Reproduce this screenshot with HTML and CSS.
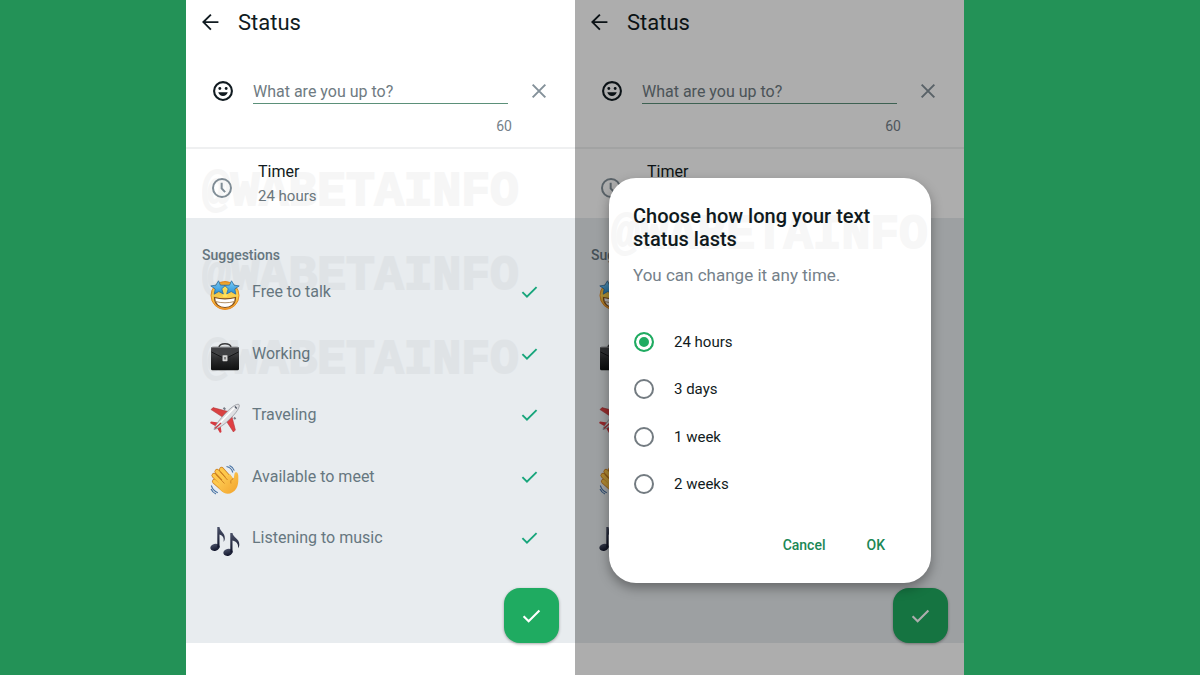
FILE: index.html
```html
<!DOCTYPE html>
<html lang="en">
<head>
    <meta charset="UTF-8">
    <meta name="viewport" content="width=device-width, initial-scale=1.0">
    <title>Status</title>
    <link rel="stylesheet" href="styles.css">
</head>
<body>
    <!-- Shared icons -->
    <svg class="sprite" aria-hidden="true">
        <defs>
            <linearGradient id="gold" x1="0" y1="0" x2="0" y2="1">
                <stop offset="0" stop-color="#f5a32a"/>
                <stop offset=".5" stop-color="#fbd34e"/>
                <stop offset="1" stop-color="#f3972a"/>
            </linearGradient>
            <linearGradient id="star" x1="0" y1="0" x2="0" y2="1">
                <stop offset="0" stop-color="#7fd0fb"/>
                <stop offset="1" stop-color="#258fd6"/>
            </linearGradient>
            <linearGradient id="leather" x1="0" y1="0" x2="0" y2="1">
                <stop offset="0" stop-color="#5a5b5e"/>
                <stop offset=".5" stop-color="#2c2d2f"/>
                <stop offset="1" stop-color="#0f1011"/>
            </linearGradient>
            <linearGradient id="skin" x1="0" y1="0" x2="1" y2="1">
                <stop offset="0" stop-color="#ffd35a"/>
                <stop offset="1" stop-color="#f2a22c"/>
            </linearGradient>
            <linearGradient id="note" x1="0" y1="0" x2="0" y2="1">
                <stop offset="0" stop-color="#4a5168"/>
                <stop offset="1" stop-color="#11152b"/>
            </linearGradient>
        </defs>
        <symbol id="back" viewBox="0 0 24 24">
            <path d="M22 11.500H3.500M12.500 2L3 11.500l9.500 9.500" fill="none" stroke="currentColor" stroke-width="2.400"/>
        </symbol>
        <symbol id="smile" viewBox="0 0 24 24">
            <circle cx="12" cy="12" r="10.700" fill="none" stroke="currentColor" stroke-width="2.500"/>
            <circle cx="8.200" cy="9" r="1.700" fill="currentColor"/>
            <circle cx="15.800" cy="9" r="1.700" fill="currentColor"/>
            <path d="M6.300 13.500h11.400c-.8 2.900-3 4.600-5.700 4.600s-4.900-1.700-5.700-4.600z" fill="currentColor"/>
        </symbol>
        <symbol id="close" viewBox="0 0 24 24">
            <path d="M2.500 2.500l19 19M21.500 2.500l-19 19" fill="none" stroke="currentColor" stroke-width="3"/>
        </symbol>
        <symbol id="clock" viewBox="0 0 24 24">
            <circle cx="12" cy="12" r="10.800" fill="none" stroke="currentColor" stroke-width="2.400"/>
            <path d="M11.600 5.800v6.600l4.200 4.600" fill="none" stroke="currentColor" stroke-width="2.400"/>
        </symbol>
        <symbol id="check" viewBox="0 0 18 14">
            <path d="M1.500 7.200l4.800 4.800L16.500 1.800" fill="none" stroke="currentColor" stroke-width="2"/>
        </symbol>
        <symbol id="starstruck" viewBox="0 0 30 30">
            <circle cx="15" cy="15.500" r="14" fill="url(#gold)" stroke="#e88d23"/>
            <path d="M12 8l3-2 3 2-1 9h-4z" fill="#ffe15a"/>
            <path d="M4.500 17.500c6.500 1.800 14.500 1.800 21 0 0 6.200-4.500 10-10.500 10s-10.500-3.800-10.500-10z" fill="#fff" stroke="#80501d" stroke-width="1.200"/>
            <path d="M5.500 21.500c6 1.700 13 1.700 19 0" fill="none" stroke="#b3926b" stroke-width="1"/>
            <path d="M8.500 .8l1.900 4.300 5 .2-3.600 3.600 1.500 5-4.500-2.400-4.600 2.700 1-5.200L.8 5.900l5-.7z" fill="url(#star)" stroke="#2d6ea5" stroke-width=".8" stroke-linejoin="round"/>
            <path d="M21.500 .8l2.700 4.400 5 .7-4.400 3.100 1 5.200-4.600-2.700-4.500 2.400 1.500-5-3.600-3.600 5-.2z" fill="url(#star)" stroke="#2d6ea5" stroke-width=".8" stroke-linejoin="round"/>
        </symbol>
        <symbol id="briefcase" viewBox="0 0 30 30">
            <path d="M9 5c.5-2.500 2-3.300 6-3.300S20.500 2.500 21 5" fill="none" stroke="#3c3d3f" stroke-width="1.500"/>
            <rect x="1" y="4.800" width="28" height="23.500" rx="1.500" fill="url(#leather)"/>
            <path d="M1.500 5.500h27v4.500L18.500 15h-7L1.500 10z" fill="#424346"/>
            <path d="M1.500 10l10 5h7l10-5" fill="none" stroke="#161719" stroke-width="1"/>
            <path d="M2 5.500h26" stroke="#858689" stroke-width=".8"/>
            <rect x="12.500" y="13.200" width="5" height="6" rx=".6" fill="#d8d8d8"/>
            <path d="M15 15v2.500" stroke="#535456" stroke-width="1.300"/>
        </symbol>
        <symbol id="plane" viewBox="0 0 30 30">
            <path d="M20 9L3 4.600 1 6.600 14 15z" fill="#d94141" stroke="#a92e33" stroke-width=".5"/>
            <path d="M21 10l4.400 17-2 2L15 16z" fill="#df3f43" stroke="#a92e33" stroke-width=".5"/>
            <path d="M8 19.500l-7-1-1 1.500 6 3.500zM10.500 22l1 7-1.500 1-3.500-6z" fill="#d63a40"/>
            <path d="M4 26.500c1-4 5-9 9-13.500C18 7.400 24 1.500 28 1.200c1.500 0 1.500 1.300 1 2.800-1.300 4.500-6.500 9.500-11.500 14.300C13 22.500 8 25.800 4 26.500z" fill="#dfe0e3" stroke="#898b92" stroke-width=".7"/>
            <path d="M7 23L25 4" stroke="#fff" stroke-width="1.500"/>
            <path d="M24.800 3.500l2 2" stroke="#4c5564" stroke-width="1.400"/>
            <path d="M5 25.500l6-5.500" stroke="#c63840" stroke-width="1.300"/>
            <path d="M13.500 4.800l1.800 1.600M24 14.500l1.500 1.600" stroke="#777c86" stroke-width="2"/>
        </symbol>
        <symbol id="wave" viewBox="0 0 30 30">
            <g fill="none" stroke-linecap="round">
                <g stroke="#c97d20" stroke-width="5">
                    <path d="M4 10.500l10 10M7 6.500L17 17M11.500 4.500l8.500 9.500M4.500 16.500l9 8"/>
                </g>
                <g stroke="#fec84b" stroke-width="3.600">
                    <path d="M4 10.500l10 10M7 6.500L17 17M11.500 4.500l8.500 9.500M4.500 16.500l9 8"/>
                </g>
            </g>
            <path d="M10 16.500L20 9l3.500 5c1-2.200 .5-6 2-6.700 2-.8 2.900 1.500 2.800 4.200 0 4 .3 8-2 12-2.500 4.400-8 6.600-12 4.500-2.500-1.200-5-4.500-6.500-7z" fill="url(#skin)"/>
            <path d="M23.500 13.500c-2.500 1-3.300 2.800-2.500 5M6.500 10l8 8.500M10.500 7l7 8" fill="none" stroke="#c97d20" stroke-width=".9"/>
            <path d="M16.500 1.500c3 .6 5.500 3 6.300 6M19.500 .6c2.300 1 4 2.800 4.800 5M1.300 20.500c1 3.300 3.500 6 6.500 7.200M1 24c1 2.200 2.700 4 5 5" fill="none" stroke="#4773a5" stroke-width="1.100"/>
        </symbol>
        <symbol id="music" viewBox="0 0 30 30">
            <g fill="url(#note)">
                <ellipse cx="5" cy="21.300" rx="4.700" ry="3.500" transform="rotate(-15 5 21.300)"/>
                <path d="M7.300 1h2.200c.3 4.500 5.700 5.500 5.300 11.500-.1 1.500-.6 2.600-1.200 3.200.7-4-.8-6.200-4.100-7.200v13H7.300z"/>
                <ellipse cx="18" cy="26.300" rx="4.700" ry="3.500" transform="rotate(-15 18 26.300)"/>
                <path d="M20.300 7h2.200c.3 4.500 7 5.500 6.800 11.500 0 1.700-.6 3-1.300 3.700.7-4.200-1.500-6.500-5.500-7.700v12h-2.200z"/>
            </g>
        </symbol>
    </svg>

    <main class="screens">
        <section class="phone">
            <header class="topbar">
                <button type="button" class="icon-btn" aria-label="Back"><svg class="icon-back"><use href="#back"/></svg></button>
                <h1>Status</h1>
            </header>
            <div class="composer">
                <div class="composer-row">
                    <button type="button" class="icon-btn" aria-label="Emoji"><svg class="icon-smile"><use href="#smile"/></svg></button>
                    <input type="text" class="status-input" placeholder="What are you up to?" aria-label="Status text" maxlength="60">
                    <button type="button" class="icon-btn muted" aria-label="Clear"><svg class="icon-close"><use href="#close"/></svg></button>
                </div>
                <p class="counter">60</p>
            </div>
            <button type="button" class="timer">
                <svg class="icon-clock"><use href="#clock"/></svg>
                <span class="timer-text">
                    <span class="timer-title">Timer</span>
                    <span class="timer-value">24 hours</span>
                </span>
            </button>
            <div class="suggestions">
                <h2>Suggestions</h2>
                <ul>
                    <li><button type="button"><svg class="emoji"><use href="#starstruck"/></svg><span>Free to talk</span><svg class="icon-check"><use href="#check"/></svg></button></li>
                    <li><button type="button"><svg class="emoji"><use href="#briefcase"/></svg><span>Working</span><svg class="icon-check"><use href="#check"/></svg></button></li>
                    <li><button type="button"><svg class="emoji"><use href="#plane"/></svg><span>Traveling</span><svg class="icon-check"><use href="#check"/></svg></button></li>
                    <li><button type="button"><svg class="emoji"><use href="#wave"/></svg><span>Available to meet</span><svg class="icon-check"><use href="#check"/></svg></button></li>
                    <li><button type="button"><svg class="emoji"><use href="#music"/></svg><span>Listening to music</span><svg class="icon-check"><use href="#check"/></svg></button></li>
                </ul>
            </div>
            <div class="watermarks" aria-hidden="true">
                <span class="watermark">@WABETAINFO</span>
                <span class="watermark">@WABETAINFO</span>
                <span class="watermark">@WABETAINFO</span>
            </div>
            <button type="button" class="fab" aria-label="Save"><svg class="icon-check"><use href="#check"/></svg></button>
        </section>

        <section class="phone">
            <header class="topbar">
                <button type="button" class="icon-btn" aria-label="Back"><svg class="icon-back"><use href="#back"/></svg></button>
                <h1>Status</h1>
            </header>
            <div class="composer">
                <div class="composer-row">
                    <button type="button" class="icon-btn" aria-label="Emoji"><svg class="icon-smile"><use href="#smile"/></svg></button>
                    <input type="text" class="status-input" placeholder="What are you up to?" aria-label="Status text" maxlength="60">
                    <button type="button" class="icon-btn muted" aria-label="Clear"><svg class="icon-close"><use href="#close"/></svg></button>
                </div>
                <p class="counter">60</p>
            </div>
            <button type="button" class="timer">
                <svg class="icon-clock"><use href="#clock"/></svg>
                <span class="timer-text">
                    <span class="timer-title">Timer</span>
                </span>
            </button>
            <div class="suggestions">
                <h2>Suggestions</h2>
                <ul>
                    <li><button type="button" aria-label="Free to talk"><svg class="emoji"><use href="#starstruck"/></svg></button></li>
                    <li><button type="button" aria-label="Working"><svg class="emoji"><use href="#briefcase"/></svg></button></li>
                    <li><button type="button" aria-label="Traveling"><svg class="emoji"><use href="#plane"/></svg></button></li>
                    <li><button type="button" aria-label="Available to meet"><svg class="emoji"><use href="#wave"/></svg></button></li>
                    <li><button type="button" aria-label="Listening to music"><svg class="emoji"><use href="#music"/></svg></button></li>
                </ul>
            </div>
            <button type="button" class="fab" aria-label="Save"><svg class="icon-check"><use href="#check"/></svg></button>

            <div class="overlay">
                <form class="dialog" role="dialog" aria-labelledby="dialogTitle">
                    <span class="watermark dialog-watermark" aria-hidden="true">@WABETAINFO</span>
                    <h2 id="dialogTitle">Choose how long your text status lasts</h2>
                    <p>You can change it any time.</p>
                    <div class="options">
                        <label><input type="radio" name="duration" value="24h" checked>24 hours</label>
                        <label><input type="radio" name="duration" value="3d">3 days</label>
                        <label><input type="radio" name="duration" value="1w">1 week</label>
                        <label><input type="radio" name="duration" value="2w">2 weeks</label>
                    </div>
                    <div class="actions">
                        <button type="button">Cancel</button>
                        <button type="button">OK</button>
                    </div>
                </form>
            </div>
        </section>
    </main>
</body>
</html>
```
FILE: styles.css
```css
* {
    margin: 0;
    padding: 0;
    box-sizing: border-box;
}

body {
    font-family: Roboto, "Liberation Sans", sans-serif;
    background: #239257;
    color: #111b21;
}

button,
input {
    font: inherit;
    color: inherit;
    border: none;
    background: none;
}

button {
    cursor: pointer;
}

svg {
    display: block;
    flex-shrink: 0;
}

.sprite {
    position: absolute;
    width: 0;
    height: 0;
}

.screens {
    display: grid;
    grid-template-columns: 1fr 1fr;
    min-height: 100vh;
    padding: 0 236px 0 186px;
}

.phone {
    position: relative;
    background: #fff;
    overflow: hidden;
}

/* Header */
.topbar {
    display: flex;
    align-items: center;
    gap: 18px;
    height: 44px;
    padding-left: 15px;
}

.topbar h1 {
    font-size: 22px;
    font-weight: 400;
}

.icon-back {
    width: 19px;
    height: 19px;
}

/* Status text */
.composer {
    height: 105px;
    padding: 34px 28px 0 27px;
    border-bottom: 2px solid #eff0f1;
}

.composer-row {
    display: flex;
    align-items: center;
}

.icon-smile {
    width: 20px;
    height: 20px;
}

.icon-close {
    width: 16px;
    height: 16px;
}

.muted {
    color: #84919a;
}

.status-input {
    flex: 1;
    min-width: 0;
    height: 26px;
    margin: 0 23px 0 20px;
    padding-top: 2px;
    font-size: 16px;
    border-bottom: 1px solid #5b9079;
    outline: none;
}

.status-input::placeholder {
    color: #6f7b82;
    opacity: 1;
}

.counter {
    padding: 13px 35px 0 0;
    font-size: 14px;
    line-height: 18px;
    text-align: right;
    color: #74818a;
}

/* Timer */
.timer {
    display: flex;
    align-items: center;
    gap: 26px;
    width: 100%;
    height: 69px;
    padding: 11px 26px 3px;
    text-align: left;
}

.icon-clock {
    width: 20px;
    height: 20px;
    color: #84919a;
}

.timer-text {
    display: flex;
    flex-direction: column;
    align-self: flex-start;
    line-height: 24px;
}

.timer-title {
    font-size: 16px;
}

.timer-value {
    font-size: 15px;
    color: #6d7980;
}

/* Suggestions */
.suggestions {
    height: 425px;
    padding-top: 28px;
    background: #e8ecef;
    color: #667780;
}

.suggestions h2 {
    padding-left: 16px;
    font-size: 14px;
    font-weight: 500;
    line-height: 18px;
}

.suggestions ul {
    display: grid;
    grid-auto-rows: 1fr;
    height: 308px;
    list-style: none;
}

.suggestions li {
    display: grid;
}

.suggestions li button {
    display: flex;
    align-items: flex-start;
    gap: 12px;
    padding: 16px 37px 0 24px;
    font-size: 16px;
    line-height: 24px;
    text-align: left;
}

.suggestions li span {
    flex: 1;
}

.emoji {
    width: 30px;
    height: 30px;
}

.icon-check {
    width: 17px;
    height: 24px;
    color: #17a57b;
}

.fab {
    position: absolute;
    right: 16px;
    bottom: 32px;
    display: grid;
    place-items: center;
    width: 55px;
    height: 55px;
    border-radius: 16px;
    background: #1fab61;
    box-shadow: 0 1px 3px rgba(0, 0, 0, 0.35);
}

.fab .icon-check {
    width: 19px;
    color: #fff;
}

/* Watermark */
.watermarks {
    position: absolute;
    top: 168px;
    left: 16px;
    display: grid;
    gap: 36px;
    pointer-events: none;
}

.watermark {
    font-family: "Liberation Mono", monospace;
    font-size: 48px;
    font-weight: 700;
    line-height: 48px;
    white-space: nowrap;
    color: #000;
    opacity: 0.03;
    -webkit-text-stroke: 2px #000;
}

.dialog-watermark {
    position: absolute;
    top: 33px;
    left: 2px;
    pointer-events: none;
}

/* Dialog */
.overlay {
    position: absolute;
    inset: 0;
    padding: 178px 33px 0 34px;
    background: rgba(0, 0, 0, 0.32);
}

.dialog {
    position: relative;
    padding: 27px 24px 22px;
    border-radius: 27px;
    background: #fff;
    box-shadow: 0 5px 12px rgba(0, 0, 0, 0.35);
    overflow: hidden;
}

.dialog h2 {
    font-size: 20px;
    font-weight: 500;
    line-height: 23px;
}

.dialog p {
    margin-top: 12px;
    font-size: 17px;
    line-height: 24px;
    color: #75818a;
}

.options {
    display: grid;
    grid-auto-rows: 1fr;
    height: 190px;
    margin-top: 31px;
}

.options label {
    display: flex;
    align-items: center;
    gap: 20px;
    padding-left: 1px;
    font-size: 15px;
    cursor: pointer;
}

.options input {
    appearance: none;
    width: 20px;
    height: 20px;
    border: 2px solid #737b81;
    border-radius: 50%;
}

.options input:checked {
    border-color: #1fab61;
    background: #1fab61;
    box-shadow: inset 0 0 0 3px #fff;
}

.actions {
    display: flex;
    justify-content: flex-end;
    gap: 41px;
    margin-top: 21px;
    padding-right: 22px;
}

.actions button {
    font-size: 14px;
    font-weight: 500;
    line-height: 32px;
    color: #1b8755;
}
```
